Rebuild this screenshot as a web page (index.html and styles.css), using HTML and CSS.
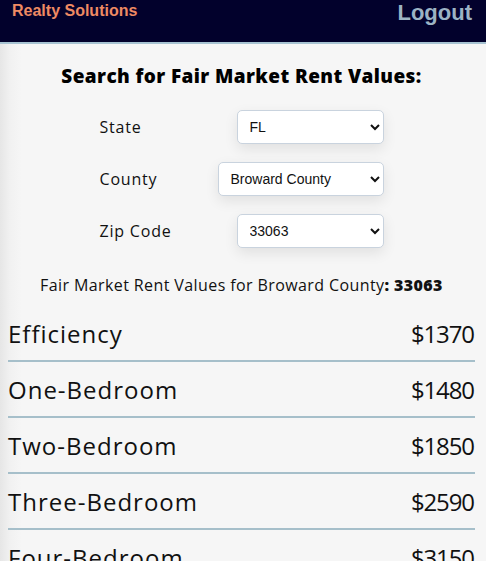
FILE: index.html
```html
<!DOCTYPE html>
<html lang="en">
<head>
<meta charset="utf-8">
<title>Fair Market Rent</title>
<link rel="stylesheet" href="styles.css">
</head>
<body>
<header class="topbar">
  <span class="brand">Realty Solutions</span>
  <a class="logout" href="#">Logout</a>
</header>
<main class="page">
  <h1 class="title">Search for Fair Market Rent Values:</h1>
  <form class="search">
    <label class="field">
      <span class="field-label">State</span>
      <select class="picker picker-short"><option>FL</option></select>
    </label>
    <label class="field">
      <span class="field-label">County</span>
      <select class="picker picker-wide"><option>Broward County</option></select>
    </label>
    <label class="field">
      <span class="field-label">Zip Code</span>
      <select class="picker picker-short"><option>33063</option></select>
    </label>
  </form>
  <p class="result">Fair Market Rent Values for Broward County<b>: 33063</b></p>
  <ul class="rents">
    <li class="rent"><span class="rent-name">Efficiency</span><span class="rent-value">$1370</span></li>
    <li class="rent"><span class="rent-name">One-Bedroom</span><span class="rent-value">$1480</span></li>
    <li class="rent"><span class="rent-name">Two-Bedroom</span><span class="rent-value">$1850</span></li>
    <li class="rent"><span class="rent-name">Three-Bedroom</span><span class="rent-value">$2590</span></li>
    <li class="rent"><span class="rent-name">Four-Bedroom</span><span class="rent-value">$3150</span></li>
  </ul>
</main>
</body>
</html>
```

FILE: styles.css
```css
html, body {
  margin: 0;
  padding: 0;
  height: 100%;
  overflow: hidden;
}
body {
  background: #f6f6f6;
  font-family: "Open Sans", "Liberation Sans", sans-serif;
  color: #111;
}
.topbar {
  height: 42px;
  background: #02012c;
  border-bottom: 2px solid #a7c3d2;
  display: flex;
  justify-content: space-between;
  align-items: flex-start;
  padding: 0 14px 0 12px;
  font-family: "Liberation Sans", Arial, sans-serif;
  font-weight: bold;
}
.brand {
  color: #ee8a63;
  font-size: 16px;
  line-height: 21px;
}
.logout {
  color: #9cb3c4;
  font-size: 22px;
  line-height: 25px;
  text-decoration: none;
}
.page {
  min-height: 100%;
  background: linear-gradient(to right, #e6e6e6 0, #f1f1f1 10px, #f6f6f6 22px);
  padding: 0 11px 0 8px;
}
.title {
  margin: 0;
  padding-top: 20px;
  text-align: center;
  font-size: 19px;
  font-weight: 800;
  letter-spacing: 0.4px;
  line-height: 24px;
  color: #000;
}
.search {
  width: 284px;
  margin: 22px auto 0;
  display: flex;
  flex-direction: column;
  gap: 18px;
}
.field {
  display: flex;
  justify-content: space-between;
  align-items: center;
}
.field-label {
  font-size: 16px;
  font-weight: 500;
  letter-spacing: 0.8px;
  color: #111;
}
.picker {
  height: 34px;
  background: #fff;
  border: 1px solid #c9d3de;
  border-radius: 5px;
  box-shadow: 0 5px 14px rgba(0, 0, 0, 0.09);
  font-family: "Liberation Sans", Arial, sans-serif;
  font-size: 14px;
  color: #111;
  padding: 0 6px 0 8px;
}
.picker-short { width: 147px; }
.picker-wide { width: 166px; }
.result {
  margin: 26px 0 0;
  text-align: center;
  font-size: 16px;
  letter-spacing: 0.4px;
  line-height: 22px;
}
.result b { font-weight: 800; }
.rents {
  list-style: none;
  margin: 10px 0 0;
  padding: 0;
}
.rent {
  height: 54px;
  display: flex;
  justify-content: space-between;
  align-items: center;
  border-bottom: 2px solid #a6bfca;
  font-size: 24px;
  font-weight: 400;
}
.rent-name {
  letter-spacing: 1px;
}
.rent-value {
  letter-spacing: -1.1px;
  margin-right: 1px;
}
```
